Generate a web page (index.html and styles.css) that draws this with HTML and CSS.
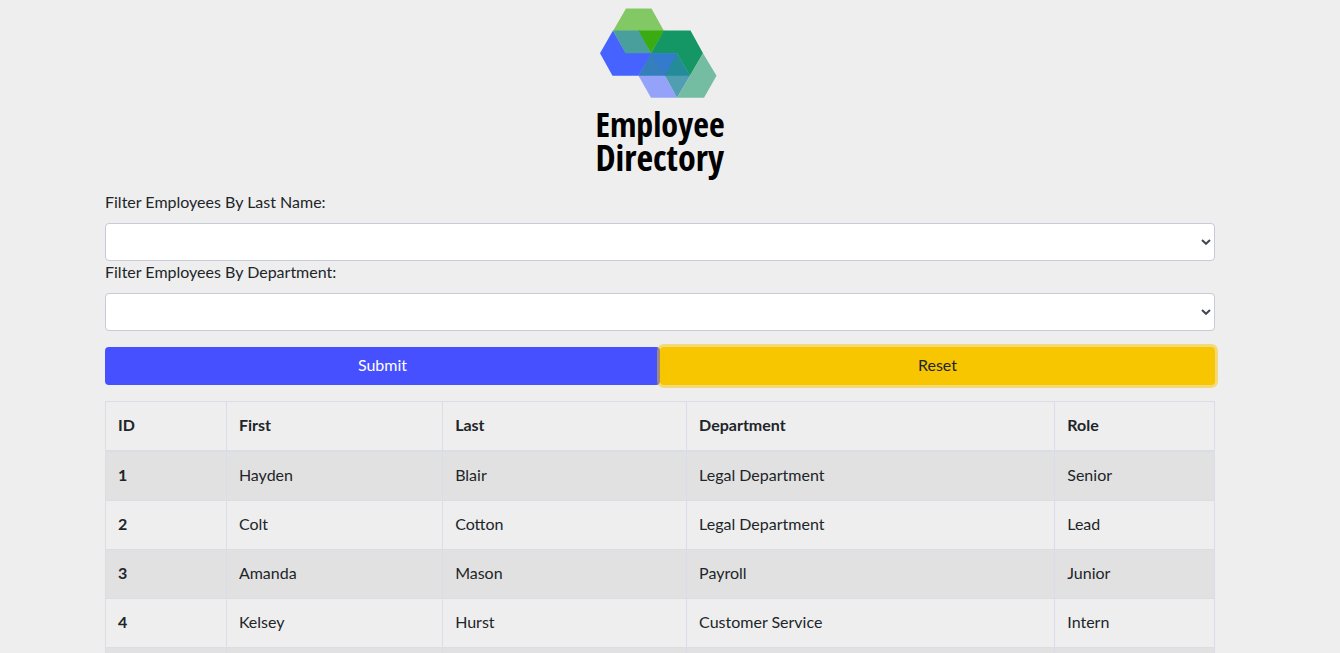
FILE: index.html
```html
<!DOCTYPE html>
<html lang="en">
<head>
<meta charset="utf-8">
<meta name="viewport" content="width=device-width, initial-scale=1">
<title>Employee Directory</title>
<link rel="stylesheet" href="styles.css">
</head>
<body>
<main class="container">
  <header class="brand">
    <svg class="brand-mark" viewBox="0 0 122 90" aria-hidden="true">
      <path fill="#357fbd" d="M52 45.300H78L91 67.800 78 80 66 68H39.500z"/>
      <path fill="#82c966" d="M27 .5h25.500L65 23H14z"/>
      <path fill="#4763ff" d="M14 22.500 1 45.300 13.500 67.800H39.500L53 44.500H26.500z"/>
      <path fill="#499f9b" d="M14 22.500H41L52 45.300H26.500z"/>
      <path fill="#3bab12" d="M39.500 22.500H65.500L52 45.300z"/>
      <path fill="#149765" d="M65 22.500H91.500L104 45.300 91 67.800 78 45.300H52z"/>
      <path fill="#357fbd" d="M52 45.300 39.500 67.800H66z"/>
      <path fill="#357bcd" d="M52 45.300H78L66 67.800z"/>
      <path fill="#248b98" d="M78 45.300 91 67.800H66z"/>
      <path fill="#95a2fa" d="M39.500 67.800H66L78 89.800H52z"/>
      <path fill="#519eb3" d="M66 67.800H91L78 89.800z"/>
      <path fill="#74bca2" d="M104 45.300 117.500 67.800 105 89.800H78L91 67.800z"/>
    </svg>
    <h1 class="brand-name"><span class="brand-top">Employee</span><span class="brand-bottom">Directory</span></h1>
  </header>
  <form class="filters">
    <label class="field-label" for="last-name">Filter Employees By Last Name:</label>
    <div class="select-wrap">
      <select class="field" id="last-name"><option></option></select>
      <svg class="chevron" viewBox="0 0 10 6" aria-hidden="true"><path d="M1 1l4 3.800L9 1"/></svg>
    </div>
    <label class="field-label" for="department">Filter Employees By Department:</label>
    <div class="select-wrap">
      <select class="field" id="department"><option></option></select>
      <svg class="chevron" viewBox="0 0 10 6" aria-hidden="true"><path d="M1 1l4 3.800L9 1"/></svg>
    </div>
    <div class="actions">
      <button class="btn btn-submit" type="button">Submit</button>
      <button class="btn btn-reset" type="button">Reset</button>
    </div>
  </form>
  <table class="directory">
    <colgroup><col class="col-id"><col class="col-first"><col class="col-last"><col class="col-dept"><col class="col-role"></colgroup>
    <thead>
      <tr><th scope="col">ID</th><th scope="col">First</th><th scope="col">Last</th><th scope="col">Department</th><th scope="col">Role</th></tr>
    </thead>
    <tbody>
      <tr><th scope="row">1</th><td>Hayden</td><td>Blair</td><td>Legal Department</td><td>Senior</td></tr>
      <tr><th scope="row">2</th><td>Colt</td><td>Cotton</td><td>Legal Department</td><td>Lead</td></tr>
      <tr><th scope="row">3</th><td>Amanda</td><td>Mason</td><td>Payroll</td><td>Junior</td></tr>
      <tr><th scope="row">4</th><td>Kelsey</td><td>Hurst</td><td>Customer Service</td><td>Intern</td></tr>
      <tr><th scope="row"></th><td></td><td></td><td></td><td></td></tr>
    </tbody>
  </table>
</main>
</body>
</html>
```
FILE: styles.css
```css
* { box-sizing: border-box; }
html { scrollbar-width: none; }
body {
  margin: 0;
  padding-right: 20px;
  background: #eee;
  color: #212529;
  font: 16px/24px Lato, sans-serif;
}
.container {
  max-width: 1140px;
  margin: 0 auto;
  padding: 0 15px;
}
.brand {
  display: flex;
  flex-direction: column;
  align-items: center;
  padding-top: 8px;
}
.brand-mark { width: 122px; height: 90px; }
.brand-name {
  margin: 9px 0 16px;
  color: #000;
  font: bold 34px/34px "Open Sans Condensed", "Liberation Sans Narrow", "Liberation Sans", sans-serif;
}
.brand-top,
.brand-bottom { display: block; }
.brand-bottom { font-size: 36px; }
.field-label {
  display: block;
  padding-bottom: 10px;
  line-height: 22px;
}
.select-wrap { position: relative; }
.field {
  display: block;
  width: 100%;
  height: 38px;
  padding: 6px 12px;
  appearance: none;
  border: 1px solid #c8cad8;
  border-radius: 4px;
  background: #fff;
  color: #495057;
  font: inherit;
}
.chevron {
  position: absolute;
  top: 16px;
  right: 4px;
  width: 10px;
  height: 6px;
  fill: none;
  stroke: #414750;
  stroke-width: 2;
  pointer-events: none;
}
.actions { display: flex; margin: 16px 0; }
.btn {
  flex: 1;
  height: 38px;
  padding: 5px 12px 7px;
  border: 0;
  border-radius: 4px;
  font: inherit;
}
.btn-submit { background: #4650ff; color: #fff; }
.btn-reset {
  background: #f7c600;
  color: #212529;
  box-shadow: 0 0 0 3px rgba(247, 198, 0, .5);
}
.directory {
  width: 100%;
  table-layout: fixed;
  border-collapse: collapse;
}
.directory th,
.directory td {
  height: 49px;
  padding: 11px 12px 13px;
  border: 1px solid #dadce6;
  text-align: left;
}
.directory thead th { border-bottom-width: 2px; }
.directory tbody tr:nth-child(odd) { background: #e1e1e1; }
.col-id { width: 10.9%; }
.col-first { width: 19.5%; }
.col-last { width: 22%; }
.col-dept { width: 33.2%; }
```
